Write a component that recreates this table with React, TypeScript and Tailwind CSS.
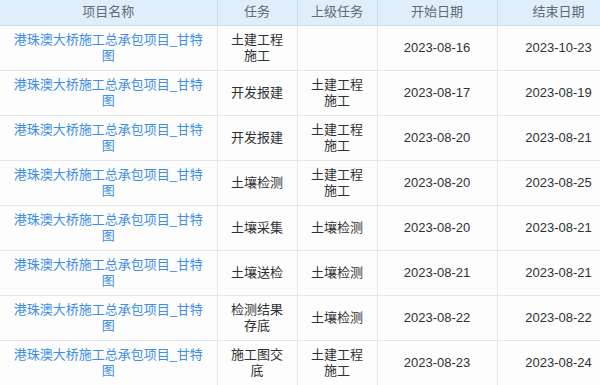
import React from "react";

const rows = [
  { task: "土建工程施工", parent: "", start: "2023-08-16", end: "2023-10-23" },
  { task: "开发报建", parent: "土建工程施工", start: "2023-08-17", end: "2023-08-19" },
  { task: "开发报建", parent: "土建工程施工", start: "2023-08-20", end: "2023-08-21" },
  { task: "土壤检测", parent: "土建工程施工", start: "2023-08-20", end: "2023-08-25" },
  { task: "土壤采集", parent: "土壤检测", start: "2023-08-20", end: "2023-08-21" },
  { task: "土壤送检", parent: "土壤检测", start: "2023-08-21", end: "2023-08-21" },
  { task: "检测结果存底", parent: "土壤检测", start: "2023-08-22", end: "2023-08-22" },
  { task: "施工图交底", parent: "土建工程施工", start: "2023-08-23", end: "2023-08-24" },
];

const font = "font-['Liberation_Sans','Noto_Sans_CJK_SC',sans-serif]";

export default function App() {
  return (
    <div className={`h-[385px] w-[600px] overflow-hidden bg-[#fcfdfc] text-[13px] leading-4 ${font}`}>
      <table className="w-[620px] table-fixed border-collapse">
        <colgroup>
          <col className="w-[217px]" />
          <col className="w-[80px]" />
          <col className="w-[80px]" />
          <col className="w-[120px]" />
          <col className="w-[123px]" />
        </colgroup>
        <thead>
          <tr className="h-[25px] bg-[#e0eefb] text-[#5f6b78]">
            {["项目名称", "任务", "上级任务", "开始日期", "结束日期"].map((h) => (
              <th key={h} className="border-b border-r border-[#cbdcee] text-center font-normal">
                {h}
              </th>
            ))}
          </tr>
        </thead>
        <tbody>
          {rows.map((r, i) => (
            <tr key={i} className="h-[45px] text-[#303133]">
              <td className="border-b border-r border-[#e4e6e8] px-3 text-center text-[#3c8ee8]">
                港珠澳大桥施工总承包项目_甘特图
              </td>
              <td className="border-b border-r border-[#e4e6e8] px-3 text-center">{r.task}</td>
              <td className="border-b border-r border-[#e4e6e8] px-3 text-center">{r.parent}</td>
              <td className="border-b border-r border-[#e4e6e8] text-center">{r.start}</td>
              <td className="border-b border-r border-[#e4e6e8] text-center">{r.end}</td>
            </tr>
          ))}
        </tbody>
      </table>
    </div>
  );
}
